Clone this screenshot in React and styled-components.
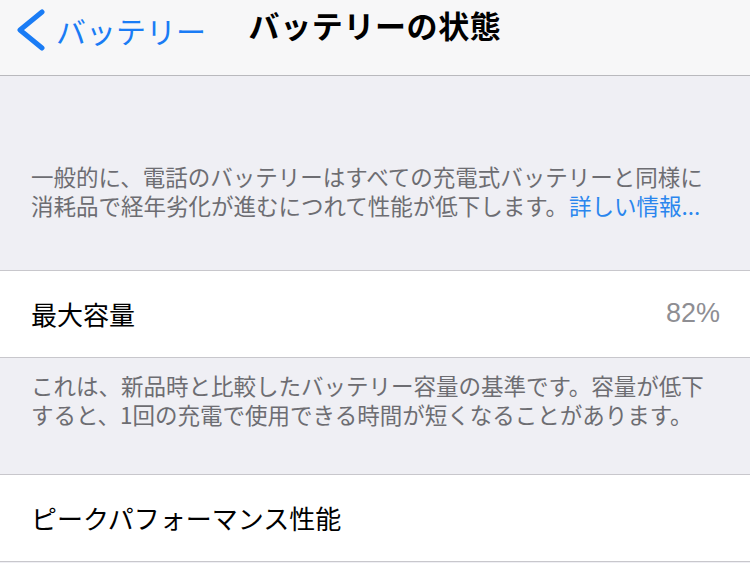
import React from "react";
import styled, { createGlobalStyle } from "styled-components";

const GlobalStyle = createGlobalStyle`
  html, body {
    margin: 0;
    padding: 0;
    background: #efeff4;
    font-family: "Noto Sans CJK JP", "Noto Sans", sans-serif;
    -webkit-font-smoothing: antialiased;
  }
`;

const Screen = styled.div`
  width: 750px;
  height: 563px;
  overflow: hidden;
  background: #efeff4;
  display: flex;
  flex-direction: column;
`;

const NavBar = styled.header`
  box-sizing: border-box;
  height: 75.5px;
  padding-bottom: 15px;
  flex-shrink: 0;
  background: #f7f7f8;
  border-bottom: 1.5px solid #b9b9bd;
  display: grid;
  grid-template-columns: 1fr auto 1fr;
  align-items: center;
`;

const BackButton = styled.a`
  display: flex;
  align-items: center;
  gap: 10px;
  padding-left: 16px;
  color: #1a7cf5;
  font-size: 30px;
  text-decoration: none;

  svg {
    width: 30px;
    height: 42px;
    flex-shrink: 0;
  }
`;

const Title = styled.h1`
  margin: 0 0 10px;
  font-size: 31px;
  font-weight: 700;
  color: #000;
  letter-spacing: 0.6px;
`;

const Footer = styled.div`
  padding: ${(p) => p.$top}px 16px ${(p) => p.$bottom}px 31px;
  font-size: 22.5px;
  line-height: 29px;
  color: #6d6d72;
  border-bottom: 1px solid #c8c7cc;
  flex-shrink: 0;
`;

const More = styled.a`
  color: #2a86ee;
  text-decoration: none;
  margin-left: 1px;
`;

const Row = styled.div`
  height: 86px;
  flex-shrink: 0;
  background: #fff;
  border-bottom: 1px solid #c8c7cc;
  display: flex;
  align-items: center;
  justify-content: space-between;
  padding: 0 30px 0 31px;
  font-size: 26px;
  color: #000;
`;

const RowValue = styled.span`
  color: #8e8e93;
  font-family: "Liberation Sans", "Noto Sans", sans-serif;
  font-size: 27px;
`;

function Chevron() {
  return (
    <svg viewBox="0 0 30 42">
      <polyline
        points="26,3 4,21 26,39"
        fill="none"
        stroke="#1a7cf5"
        strokeWidth="5"
        strokeLinecap="round"
        strokeLinejoin="round"
      />
    </svg>
  );
}

export default function App() {
  return (
    <>
      <GlobalStyle />
      <Screen>
        <NavBar>
          <BackButton href="#">
            <Chevron />
            バッテリー
          </BackButton>
          <Title>バッテリーの状態</Title>
          <span />
        </NavBar>

        <Footer $top={86} $bottom={50}>
          一般的に、電話のバッテリーはすべての充電式バッテリーと同様に
          <br />
          消耗品で経年劣化が進むにつれて性能が低下します。
          <More href="#">詳しい情報...</More>
        </Footer>

        <Row>
          <span>最大容量</span>
          <RowValue>82%</RowValue>
        </Row>

        <Footer $top={13} $bottom={45}>
          これは、新品時と比較したバッテリー容量の基準です。容量が低下
          <br />
          すると、1回の充電で使用できる時間が短くなることがあります。
        </Footer>

        <Row>
          <span>ピークパフォーマンス性能</span>
        </Row>
      </Screen>
    </>
  );
}
